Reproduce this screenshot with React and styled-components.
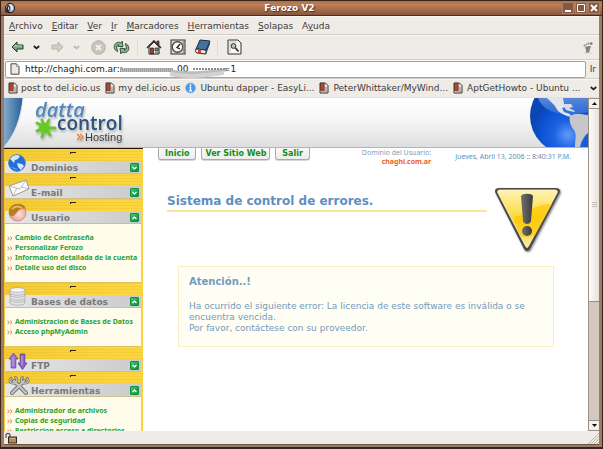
import React from 'react';
import styled, { createGlobalStyle } from 'styled-components';

const Global = createGlobalStyle`
  * { box-sizing: border-box; }
  html, body { margin: 0; padding: 0; }
  body { font-family: "DejaVu Sans", sans-serif; font-size: 9px; color: #3c3c3c; }
  button, input { font: inherit; color: inherit; margin: 0; padding: 0; border: 0; background: none; }
  a { color: inherit; text-decoration: none; }
  h1, h2, p, ul { margin: 0; padding: 0; }
  ul { list-style: none; }
  svg { display: block; flex: none; }
`;

/* ---------- window frame ---------- */

const Window = styled.div`
  display: flex;
  flex-direction: column;
  height: 100vh;
  padding: 0 3px;
  background: #9b7c68;
  border: solid #3a2417;
  border-width: 1px 1px 2px;
  overflow: hidden;
`;

const TitleBar = styled.header`
  display: grid;
  grid-template-columns: 50px 1fr 50px;
  align-items: center;
  flex: none;
  height: 15px;
  margin: 0 -3px;
  padding: 0 3px;
  background: linear-gradient(#a8714f, #bd7d57 25%, #a26a48 65%, #855740);
  border-bottom: 1px solid #4b2d1e;
`;

const WindowTitle = styled.h1`
  font-size: 9px;
  line-height: 14px;
  text-align: center;
  color: #fff;
  text-shadow: 1px 1px 1px #4b2d1e;
  padding-right: 24px;
`;

const WindowButtons = styled.div`
  display: flex;
  justify-content: flex-end;
  gap: 3px;
`;

const WindowButton = styled.button`
  width: 10px;
  height: 10px;
  background: #855843;
  outline: 1px solid #a98068;
`;

const Inner = styled.div`
  display: flex;
  flex-direction: column;
  flex: 1;
  min-height: 0;
  background: #efebe7;
  border-bottom: 1px solid #6d5546;
  margin-bottom: 2px;
`;

/* ---------- browser chrome ---------- */

const Bar = styled.div`
  display: flex;
  align-items: center;
  flex: none;
  height: ${(p) => p.$height}px;
  padding: 0 5px;
  border-bottom: 1px solid #d3cdc5;
  box-shadow: inset 0 1px #f9f8f6;
  white-space: nowrap;
`;

const MenuBar = styled(Bar)`
  gap: 9px;
  padding-top: 1px;
  line-height: 12px;
`;

const MenuButton = styled.button`
  line-height: 12px;
`;

const Mnemonic = styled.span`
  text-decoration: underline;
  text-underline-offset: 1px;
`;

const ToolButton = styled.button`
  display: flex;
  align-items: center;
  justify-content: center;
  width: ${(p) => p.$width || 16}px;
  margin-right: ${(p) => p.$gap || 0}px;
`;

const Divider = styled.span`
  width: 1px;
  height: 16px;
  margin-right: 8px;
  background: #e0dbd5;
`;

const Spacer = styled.span`
  flex: 1;
`;

const AddressBar = styled(Bar)`
  padding: 0 3px 0 1px;
  gap: 4px;
`;

const AddressField = styled.label`
  position: relative;
  display: flex;
  align-items: center;
  flex: 1;
  height: 17px;
  padding-left: 4px;
  gap: 5px;
  background: #fff;
  border: 1px solid #aaa197;
  border-radius: 2px;
`;

const AddressInput = styled.input`
  flex: 1;
  min-width: 0;
  height: 14px;
  color: #222;
  outline: 0;
  white-space: pre;
`;

const Smudge = styled.svg`
  position: absolute;
  left: 113px;
  top: 1px;
`;

const BookmarkBar = styled(Bar)`
  gap: 5px;
  padding: 0 4px;
  border-bottom-color: #e4dfd9;
`;

const Bookmark = styled.a`
  display: flex;
  align-items: center;
  gap: ${(p) => p.$gap}px;
  line-height: 12px;
`;

const StatusBar = styled.footer`
  display: flex;
  align-items: center;
  justify-content: space-between;
  flex: none;
  height: 13px;
`;

/* ---------- scrollable page ---------- */

const Viewport = styled.div`
  display: flex;
  flex: 1;
  min-height: 0;
`;

const Page = styled.main`
  display: flex;
  flex-direction: column;
  flex: 1;
  min-width: 0;
  overflow: hidden;
  background: #fff;
`;

const ScrollTrack = styled.div`
  display: flex;
  flex-direction: column;
  flex: none;
  width: 11px;
  background: #d2c9c0;
  border-left: 1px solid #9a9086;
`;

const ScrollArrow = styled.button`
  display: flex;
  align-items: center;
  justify-content: center;
  flex: none;
  height: 11px;
  background: #f3f0ed;
  border: solid #9a9086;
  border-width: 1px 0;
`;

const ScrollThumb = styled.div`
  display: flex;
  align-items: center;
  justify-content: center;
  flex: 0 0 58%;
  background: linear-gradient(90deg, #fcfbfa, #e6e1dc);
  border-bottom: 1px solid #9a9086;
`;

const Banner = styled.header`
  display: flex;
  justify-content: space-between;
  flex: none;
  height: 50px;
  background: linear-gradient(#fff, #f6f6f6 45%, #dedede);
  border-bottom: 1px solid #b4b4b4;
  overflow: hidden;
`;

const Brand = styled.div`
  display: flex;
`;

const Columns = styled.div`
  display: flex;
  flex: 1;
  min-height: 0;
`;

const Sidebar = styled.nav`
  flex: none;
  width: 139px;
  padding: 0 2px 0 1px;
  overflow: hidden;
  border-top: 1px solid #1f1a08;
  background:
    linear-gradient(90deg, rgba(200, 150, 20, 0.18), transparent 80%),
    repeating-linear-gradient(#fdd63d 0 2px, #f6cd37 2px 3px);
`;

const SectionHead = styled.div`
  display: grid;
  grid-template-columns: 26px 1fr 9px;
  align-items: end;
  position: relative;
  height: 25px;
  padding-right: 2px;
  background: linear-gradient(90deg, #e6e6e6, #cbcbcb) bottom / 100% 12px no-repeat;
  border-bottom: 1px solid #cfc08a;
`;

const Handle = styled.span`
  position: absolute;
  top: 3px;
  left: 65px;
  width: 6px;
  height: 2px;
  border: solid #2b2616;
  border-width: 1px 0 0 1px;
`;

const IconSlot = styled.span`
  display: flex;
  align-items: flex-end;
  height: 20px;
  padding: 0 0 1px 3px;
`;

const SectionTitle = styled.h2`
  font-size: 9px;
  line-height: 10px;
  color: #797979;
`;

const Toggle = styled.button`
  display: flex;
  align-items: center;
  justify-content: center;
  width: 9px;
  height: 9px;
  margin-bottom: 1px;
  background: linear-gradient(135deg, #4cc56c, #05933a);
  border: 1px solid #0f8f3a;
  border-radius: 1px;
`;

const LinkPanel = styled.ul`
  height: ${(p) => p.$height}px;
  padding: 9px 0 0 2px;
  background: #fffceb;
  border-bottom: 1px solid #dcc364;
`;

const LinkItem = styled.li`
  display: grid;
  grid-template-columns: 8px 1fr;
  align-items: center;
  height: 10px;
  font-family: "Noto Sans", "DejaVu Sans", sans-serif;
  font-size: 7px;
  line-height: 10px;
  font-weight: 700;
  color: #2ba030;
  white-space: nowrap;
`;

const Content = styled.section`
  flex: 1;
  min-width: 0;
`;

const TopRow = styled.div`
  display: flex;
  align-items: flex-start;
  padding: 0 17px 0 15px;
  white-space: nowrap;
`;

const Tabs = styled.div`
  display: flex;
  gap: 5px;
`;

const TabLink = styled.a`
  height: 12px;
  padding: 0 ${(p) => (p.$snug ? 3 : 6)}px;
  font-size: 8px;
  line-height: 11px;
  font-weight: 700;
  color: #138d14;
  background: linear-gradient(#f9f9f9, #ededed);
  border: 1px solid #a9a9a9;
  border-top: 0;
  border-radius: 0 0 3px 3px;
  box-shadow: 0 1px #d8d8d8;
`;

const Owner = styled.p`
  margin-left: auto;
  font-family: "Noto Sans", "DejaVu Sans", sans-serif;
  font-size: 7px;
  line-height: 9px;
  text-align: right;
  color: #7a9fbd;
`;

const OwnerDomain = styled.a`
  display: block;
  font-weight: 700;
  color: #ef6216;
`;

const DateText = styled.time`
  margin: 4px 0 0 24px;
  font-family: "Noto Sans", "DejaVu Sans", sans-serif;
  font-size: 7px;
  line-height: 9px;
  color: #5f8fb0;
`;

const ErrorHeader = styled.div`
  display: flex;
  justify-content: space-between;
  padding: 21px 25px 0 24px;
`;

const ErrorTitle = styled.h2`
  flex: 1;
  align-self: flex-start;
  margin: 6px 7px 0 0;
  padding-bottom: 1px;
  font-size: 12px;
  line-height: 16px;
  color: #5f8fc0;
  border-bottom: 2px solid #fae694;
`;

const Notice = styled.div`
  min-height: 81px;
  margin: 13px 34px 0 35px;
  padding: 8px 10px;
  color: #7299bd;
  background: #fffef4;
  border: 1px solid #f9efc0;
`;

const NoticeTitle = styled.h2`
  margin-bottom: 12px;
  font-size: 10px;
  line-height: 14px;
`;

const NoticeText = styled.p`
  font-size: 9px;
  line-height: 11px;
`;

/* ---------- drawings ---------- */

const AppIcon = () => (
  <svg width="11" height="12" viewBox="0 0 11 12">
    <circle cx="6" cy="6" r="4.6" fill="#9ab3c8" stroke="#1d1d22" />
    <path d="M5 2c3 0 4 2 4 5l-2 3c1-3 0-5-2-8z" fill="#e6edf2" />
    <path d="M1 10L4 2l2 3-1 6z" fill="#25282e" />
    <path d="M4 4l1 2-1 3z" fill="#fff" />
  </svg>
);

const Arrow = ({ flip, muted }) => (
  <svg width="13" height="12" viewBox="0 0 13 12">
    <path
      d={flip ? 'M12 6L7 1v3H1v4h6v3z' : 'M1 6l5-5v3h6v4H6v3z'}
      fill={muted ? '#d1cdc7' : '#74a878'}
      stroke={muted ? '#b9b4ae' : '#263c28'}
      strokeLinejoin="round"
    />
    {!muted && <path d="M3 6l2-2v1h6" fill="none" stroke="#bbdcb9" />}
  </svg>
);

const Caret = ({ muted }) => (
  <svg width="7" height="5" viewBox="0 0 7 5">
    <path d="M0.8 1l2.7 2.3L6.2 1" fill="none" stroke={muted ? '#bfb9b2' : '#1c1c1c'} strokeWidth="1.7" />
  </svg>
);

const StopIcon = () => (
  <svg width="15" height="15" viewBox="0 0 15 15">
    <circle cx="7.5" cy="7.5" r="6.8" fill="#c9c4be" stroke="#b5b0aa" />
    <path d="M5 5l5 5M10 5l-5 5" stroke="#f3f0ed" strokeWidth="1.9" />
  </svg>
);

const ReloadIcon = () => (
  <svg width="17" height="15" viewBox="0 0 17 15" strokeLinejoin="round">
    <path d="M4.500 11.500C1 10 0 5.500 3 3.200 4.500 2 6.500 2 8 3l1.200-1.800.8 5.600-5.300-.6L6 4.800C4 4.500 3 6.500 4 8.500z" fill="#8dbd8e" stroke="#26402a" strokeWidth=".9" />
    <path d="M12.500 3.500c3.500 1.500 4.500 6 1.500 8.300-1.500 1.200-3.500 1.200-5 .2l-1.200 1.800L7 8.200l5.300.6L11 10.200c2 .3 3-1.700 2-3.700z" fill="#8dbd8e" stroke="#26402a" strokeWidth=".9" />
  </svg>
);

const HomeIcon = () => (
  <svg width="16" height="16" viewBox="0 0 16 16">
    <path d="M3 8v7h10V8L8 3z" fill="#f2efe9" stroke="#26211f" />
    <path d="M11 2h2v4h-2z" fill="#a33a2a" stroke="#26211f" strokeWidth=".7" />
    <path d="M1 9l7-7 7 7" fill="none" stroke="#3b3432" strokeWidth="1.700" />
    <path d="M4.500 9h3v6h-3z" fill="#9c3e29" stroke="#26211f" strokeWidth=".7" />
    <path d="M9 9h3v3H9z" fill="#7893aa" stroke="#26211f" strokeWidth=".7" />
    <path d="M9 14h5" stroke="#4b8a3f" strokeWidth="1.500" />
  </svg>
);

const HistoryIcon = () => (
  <svg width="16" height="16" viewBox="0 0 16 16">
    <rect x="1" y="1" width="14" height="14" fill="#dad7d2" stroke="#33312f" />
    <circle cx="7.500" cy="8" r="5.300" fill="#fbfbfb" stroke="#4b4a48" strokeWidth="1.400" />
    <path d="M10 5L7 8.500l3 1.500" fill="none" stroke="#222" strokeWidth="1.300" />
    <path d="M13.300 2v12" stroke="#8c8a86" />
  </svg>
);

const BookIcon = () => (
  <svg width="17" height="16" viewBox="0 0 17 16">
    <path d="M6 1l10 1-4 9-10-1z" fill="#44709e" stroke="#1c2b3c" strokeLinejoin="round" />
    <path d="M2 10c-1 2-1 3 1 4l9 1v-4z" fill="#ece8e2" stroke="#26292e" strokeLinejoin="round" />
    <path d="M12 11l4-9v3l-4 10z" fill="#26415e" />
    <path d="M4 10v5l1.500-1L7 15.500V10.500z" fill="#c6452c" />
  </svg>
);

const SearchPageIcon = () => (
  <svg width="15" height="16" viewBox="0 0 15 16">
    <path d="M1 1h10l3 3v11H1z" fill="#f8f6f4" stroke="#343230" strokeLinejoin="round" />
    <path d="M3 13V3h7" fill="none" stroke="#c8c4be" />
    <circle cx="6.500" cy="7" r="2.400" fill="#a8cbb6" stroke="#2c2c2c" />
    <path d="M8.500 9l3 3.500" stroke="#2c2c2c" strokeWidth="1.700" />
  </svg>
);

const FootIcon = () => (
  <svg width="12" height="13" viewBox="0 0 12 13">
    <path d="M3 6c2-1 4-1 6-1L8 8l-1 4H4L4 9z" fill="#85817c" />
    <g fill="#85817c">
      <circle cx="2.500" cy="4.500" r=".9" /><circle cx="4.500" cy="3.300" r=".9" />
      <circle cx="6.600" cy="2.600" r="1" /><ellipse cx="9.300" cy="2.500" rx="1.300" ry="1.600" />
    </g>
    <path d="M2 12h8" stroke="#d7d2cc" />
  </svg>
);

const PageIcon = () => (
  <svg width="10" height="12" viewBox="0 0 10 12">
    <path d="M1 .8h5.500L9 3.500v7.700H1z" fill="#eceae6" stroke="#4a4744" />
    <path d="M6.500 1v2.500H9" fill="#fff" stroke="#77736f" strokeWidth=".7" />
  </svg>
);

const TagIcon = () => (
  <svg width="10" height="12" viewBox="0 0 10 12">
    <path d="M1 1h5.500L9 3.500V11H1z" fill="#e5e1dc" stroke="#3a3633" />
    <path d="M1.500 1.300h3.700v7.200H1.500z" fill="#b8452d" stroke="#5b251b" strokeWidth=".7" />
    <path d="M7 5v4.500M2.500 10h5" stroke="#8b857e" />
  </svg>
);

const InfoIcon = () => (
  <svg width="11" height="12" viewBox="0 0 11 12">
    <circle cx="5.500" cy="6" r="5" fill="#4c97e4" stroke="#8cbcf0" strokeWidth=".8" />
    <path d="M5.500 2.300v1.700M4.500 5.300h1v3.500M4 8.900h3" stroke="#fff" strokeWidth="1.400" fill="none" />
  </svg>
);

const LockIcon = () => (
  <svg width="13" height="12" viewBox="0 0 13 12">
    <path d="M2 6V3C2.500 .8 5.500 .8 6 3v2" fill="none" stroke="#4c4b49" strokeWidth="1.200" />
    <rect x="4.500" y="5" width="8" height="6" fill="#b58a58" stroke="#33271c" />
    <path d="M6 6.500h5" stroke="#d5b489" />
  </svg>
);

const GripIcon = () => (
  <svg width="12" height="12" viewBox="0 0 12 12">
    <path d="M1 12L12 1M4 12l8-8M7 12l5-5M10 12l2-2" stroke="#bdb7af" strokeWidth="1" />
  </svg>
);

const Swoosh = () => (
  <svg width="20" height="49" viewBox="0 0 20 49">
    <defs>
      <linearGradient id="swoosh" x1="0" x2="1">
        <stop offset="0" stopColor="#83a9cb" /><stop offset="1" stopColor="#245f98" />
      </linearGradient>
    </defs>
    <path d="M0 0h19C17 20 11 37 0 49z" fill="url(#swoosh)" />
    <path d="M19 0C17 20 11 37 0 49" fill="none" stroke="#dce6ee" />
  </svg>
);

const Logo = () => (
  <svg width="112" height="49" viewBox="0 0 112 49" role="img" aria-label="datta control Hosting">
    <defs>
      <filter id="logoShadow" x="-10%" y="-10%" width="130%" height="140%">
        <feDropShadow dx="1" dy="2" stdDeviation="1" floodColor="#777" floodOpacity=".5" />
      </filter>
    </defs>
    <g filter="url(#logoShadow)">
      <text x="11" y="19" fontFamily="Open Sans, sans-serif" fontStyle="italic" fontWeight="600" fontSize="20" fill="#5288bd">datta</text>
      <text x="33" y="32" fontFamily="Open Sans, sans-serif" fontWeight="600" fontSize="19" fill="#2b5480">control</text>
      <g stroke="#67c925" fill="#67c925" strokeWidth="3" strokeLinecap="round">
        <circle cx="20.500" cy="30" r="5.500" stroke="none" />
        <path d="M20 30l-2-8M21 30l4-8M20 29l-7-4M20 30l-7 3M20 31l-2 8M22 31l4 6M22 30l9 0" />
      </g>
      <path d="M53 36l3 3-3 3M56 36l3 3-3 3" fill="none" stroke="#f07b32" strokeWidth="1.300" />
      <text x="61" y="43" fontFamily="Liberation Sans, sans-serif" fontSize="11" fill="#3b3b3b">Hosting</text>
    </g>
  </svg>
);

const BannerGlobe = () => (
  <svg width="58" height="49" viewBox="0 0 58 49">
    <defs>
      <radialGradient id="sea" cx="38" cy="37" r="36" gradientUnits="userSpaceOnUse">
        <stop offset="0" stopColor="#5f9bf9" /><stop offset=".4" stopColor="#1c62e2" />
        <stop offset=".8" stopColor="#0a50d0" /><stop offset="1" stopColor="#0c45b4" />
      </radialGradient>
      <linearGradient id="shine" x1="0" x2="0" y1="0" y2="1">
        <stop offset="0" stopColor="#8ab4f2" /><stop offset="1" stopColor="#3b78e0" />
      </linearGradient>
    </defs>
    <circle cx="38" cy="18" r="38" fill="url(#sea)" />
    <path d="M8 0h50v14c-20 5-44 3-50-14z" fill="url(#shine)" opacity=".6" />
    <path d="M17 0h16l1 6 2 3-4 1 2 4 6 2 1 3-4-1c-5-2-9-4-11-8-1-3-5-6-9-10z" fill="#e3e5ea" />
    <path d="M33 6h8l2 3-4 1 6 3-1 1-8-2z" fill="#d9dde6" />
    <path d="M40 18c4-3 10-2 18-1v18c-5 4-7 10-8 14h-5c0-8 2-12-1-17-4-5-5-10-4-14z" fill="#c6c7cb" />
  </svg>
);

const WarningIcon = () => (
  <svg width="69" height="66" viewBox="0 0 69 66" role="img" aria-label="Advertencia">
    <defs>
      <linearGradient id="warn" x1="0" y1="0" x2="0" y2="1">
        <stop offset="0" stopColor="#fff3b4" /><stop offset=".5" stopColor="#fbd936" /><stop offset="1" stopColor="#fbe9a0" />
      </linearGradient>
      <linearGradient id="mark" x1="0" x2="1">
        <stop offset="0" stopColor="#707070" /><stop offset="1" stopColor="#3b3b3b" />
      </linearGradient>
      <filter id="warnShadow" x="-10%" y="-10%" width="130%" height="130%">
        <feDropShadow dx="1" dy="1" stdDeviation="1" floodColor="#000" floodOpacity=".5" />
      </filter>
    </defs>
    <path d="M5 1h57c4 0 5 3 3 6L36 62c-2 3-4 3-6 0L2 7C0 4 1 1 5 1z" fill="#4c4c4c" filter="url(#warnShadow)" />
    <path d="M6 3h55c2 0 3 1 2 3L34.500 59c-1 2-2 2-3 0L4 6C3 4 4 3 6 3z" fill="url(#warn)" stroke="#fff6cc" strokeWidth=".8" />
    <path d="M21 29c12 0 16-12 37-12L41 48c-5 3-11 3-15 1L20 34z" fill="#ffc800" opacity=".7" />
    <path d="M27 9c1-3 11-3 12 0l-2 25c-1 4-7 4-8 0z" fill="url(#mark)" />
    <circle cx="33" cy="44" r="5" fill="url(#mark)" />
  </svg>
);

const SectionIcon = ({ kind }) => {
  if (kind === 'globe') {
    return (
      <svg width="18" height="18" viewBox="0 0 18 18">
        <circle cx="9" cy="9" r="8.300" fill="#236fd8" stroke="#4b76b5" />
        <path d="M2 5c3-4 7-5 10-3l-2 3-3 1-1 3-2-2zM9 9l5 1 2 2-3 4-3-3z" fill="#d4e6fb" />
        <path d="M4 13c2 2 4 2 5 2" stroke="#6aaaf8" fill="none" />
      </svg>
    );
  }
  if (kind === 'mail') {
    return (
      <svg width="22" height="18" viewBox="0 0 22 18">
        <path d="M1 7l17-6 3 9L5 17z" fill="#fafafa" stroke="#9b9b9b" strokeLinejoin="round" />
        <path d="M1 7l11 3 6-9M5 17l4-8M21 10l-8-2" fill="none" stroke="#b0b0b0" strokeWidth=".8" />
      </svg>
    );
  }
  if (kind === 'user') {
    return (
      <svg width="19" height="19" viewBox="0 0 19 19">
        <defs>
          <radialGradient id="skin" cx=".6" cy=".6" r=".5">
            <stop offset="0" stopColor="#fbe0dc" /><stop offset="1" stopColor="#ee9c92" />
          </radialGradient>
        </defs>
        <circle cx="9.500" cy="9.500" r="8.500" fill="url(#skin)" stroke="#c58272" strokeWidth=".8" />
        <path d="M1 10C1 4 5 1 10 1s7 2 8 5c-4-1-6 0-8 2-2 2-3 4-5 5-3 0-4-1-4-3z" fill="#b97c1c" />
        <path d="M4 6c3-3 7-3 10-1" stroke="#e6bb57" strokeWidth="2" fill="none" />
      </svg>
    );
  }
  if (kind === 'database') {
    return (
      <svg width="19" height="19" viewBox="0 0 19 19" fill="#e6e6e6" stroke="#a2a2a2" strokeWidth=".7">
        <path d="M2 13v3c2 3 13 3 15 0v-3z" /><ellipse cx="9.500" cy="13" rx="7.500" ry="2.300" />
        <path d="M2 8v3c2 3 13 3 15 0V8z" /><ellipse cx="9.500" cy="8" rx="7.500" ry="2.300" />
        <path d="M2 3v3c2 3 13 3 15 0V3z" /><ellipse cx="9.500" cy="3" rx="7.500" ry="2.300" fill="#f8f8f8" />
      </svg>
    );
  }
  if (kind === 'ftp') {
    return (
      <svg width="20" height="18" viewBox="0 0 20 18" strokeLinejoin="round">
        <path d="M5.500 1L10 7H7.800v9H3.200V7H1z" fill="#9b72ce" stroke="#67459b" strokeWidth=".8" />
        <path d="M14.500 17.500L10 11h2.200V2h4.600v9H19z" fill="#8e64c8" stroke="#5a398d" strokeWidth=".8" />
        <path d="M5 5v9M14 4v9" stroke="#c9aceb" />
      </svg>
    );
  }
  return (
    <svg width="22" height="19" viewBox="0 0 22 19" fill="none" strokeLinecap="round">
      <path d="M4 17L16 5M18 17L6 5" stroke="#6f6f6f" strokeWidth="4" />
      <path d="M3 2C0 6 4 8.500 8 6.500M7.500 1.500C9 3 9 5 8 6.500M19 2c3 4-1 6.500-5 4.500M14.500 1.500C13 3 13 5 14 6.500" stroke="#6f6f6f" strokeWidth="2.600" />
      <path d="M4 17L16 5M18 17L6 5" stroke="#c4c4c4" strokeWidth="2.400" />
      <path d="M3 2C0 6 4 8.500 8 6.500M7.500 1.500C9 3 9 5 8 6.500M19 2c3 4-1 6.500-5 4.500M14.500 1.500C13 3 13 5 14 6.500" stroke="#c4c4c4" strokeWidth="1.200" />
    </svg>
  );
};

const Bullet = () => (
  <svg width="6" height="6" viewBox="0 0 6 6">
    <path d="M.5 1.700l1.700 1.700L.5 5.200M3.200 1.700L5 3.400 3.200 5.200" fill="none" stroke="#f0632b" />
  </svg>
);

/* ---------- data ---------- */

const menus = [
  ['', 'A', 'rchivo'], ['', 'E', 'ditar'], ['', 'V', 'er'], ['', 'I', 'r'],
  ['', 'M', 'arcadores'], ['', 'H', 'erramientas'], ['', 'S', 'olapas'], ['A', 'y', 'uda'],
];

const bookmarks = [
  { label: 'post to del.icio.us' },
  { label: 'my del.icio.us' },
  { label: 'Ubuntu dapper - EasyLi...', info: true },
  { label: 'PeterWhittaker/MyWind...', wide: true },
  { label: 'AptGetHowto - Ubuntu ...', wide: true },
];

const address = `http://chaghi.com.ar::${' '.repeat(19)}00${' '.repeat(12)}=1`;

const sections = [
  { title: 'Dominios', kind: 'globe' },
  { title: 'E-mail', kind: 'mail' },
  {
    title: 'Usuario', kind: 'user', height: 59,
    links: ['Cambio de Contraseña', 'Personalizar Ferozo', 'Información detallada de la cuenta', 'Detalle uso del disco'],
  },
  {
    title: 'Bases de datos', kind: 'database', height: 39,
    links: ['Administracion de Bases de Datos', 'Acceso phpMyAdmin'],
  },
  { title: 'FTP', kind: 'ftp' },
  {
    title: 'Herramientas', kind: 'tools', height: 59,
    links: ['Administrador de archivos', 'Copias de seguridad', 'Restriccion acceso a directorios'],
  },
];

const Section = ({ title, kind, links, height }) => (
  <section>
    <SectionHead>
      <Handle />
      <IconSlot><SectionIcon kind={kind} /></IconSlot>
      <SectionTitle>{title}</SectionTitle>
      <Toggle aria-label={title} aria-expanded={!!links}>
        <svg width="5" height="4" viewBox="0 0 5 4">
          <path d={links ? 'M.5 3l2-2 2 2' : 'M.5 1l2 2 2-2'} fill="none" stroke="#fff" strokeWidth="1.200" />
        </svg>
      </Toggle>
    </SectionHead>
    {links && (
      <LinkPanel $height={height}>
        {links.map((link) => (
          <LinkItem key={link}><Bullet /><a href="#">{link}</a></LinkItem>
        ))}
      </LinkPanel>
    )}
  </section>
);

export default function App() {
  return (
    <>
      <Global />
      <Window>
        <TitleBar>
          <AppIcon />
          <WindowTitle>Ferozo V2</WindowTitle>
          <WindowButtons>
            <WindowButton aria-label="Minimizar">
              <svg width="10" height="10" viewBox="0 0 10 10"><path d="M2 8h6" stroke="#fff" strokeWidth="2" /></svg>
            </WindowButton>
            <WindowButton aria-label="Maximizar">
              <svg width="10" height="10" viewBox="0 0 10 10"><path d="M1.500 1.500h7v7h-7z" fill="none" stroke="#fff" /></svg>
            </WindowButton>
            <WindowButton aria-label="Cerrar">
              <svg width="10" height="10" viewBox="0 0 10 10"><path d="M2 2l6 6M8 2L2 8" stroke="#fff" strokeWidth="1.800" /></svg>
            </WindowButton>
          </WindowButtons>
        </TitleBar>
        <Inner>
          <MenuBar as="nav" $height={19}>
            {menus.map(([before, key, after]) => (
              <MenuButton key={key}>{before}<Mnemonic>{key}</Mnemonic>{after}</MenuButton>
            ))}
          </MenuBar>
          <Bar $height={25}>
            <ToolButton $gap={5} aria-label="Atrás"><Arrow /></ToolButton>
            <ToolButton $width={12} $gap={7} aria-label="Historial atrás"><Caret /></ToolButton>
            <ToolButton $gap={5} disabled aria-label="Adelante"><Arrow flip muted /></ToolButton>
            <ToolButton $width={12} $gap={8} disabled aria-label="Historial adelante"><Caret muted /></ToolButton>
            <ToolButton $gap={7} disabled aria-label="Detener"><StopIcon /></ToolButton>
            <ToolButton $gap={8} aria-label="Recargar"><ReloadIcon /></ToolButton>
            <Divider />
            <ToolButton $gap={8} aria-label="Inicio"><HomeIcon /></ToolButton>
            <ToolButton $gap={8} aria-label="Historial"><HistoryIcon /></ToolButton>
            <ToolButton $gap={7} aria-label="Marcadores"><BookIcon /></ToolButton>
            <Divider />
            <ToolButton aria-label="Buscar"><SearchPageIcon /></ToolButton>
            <Spacer />
            <FootIcon />
          </Bar>
          <AddressBar $height={19}>
            <AddressField>
              <PageIcon />
              <AddressInput aria-label="Dirección" defaultValue={address} />
              <Smudge width="114" height="15" viewBox="0 0 114 15">
                <defs>
                  <filter id="soft" x="-5%" y="-30%" width="110%" height="160%"><feGaussianBlur stdDeviation=".7" /></filter>
                </defs>
                <g filter="url(#soft)" fill="none">
                  <path d="M1 7h53" stroke="#bdbdbd" strokeWidth="4" />
                  <path d="M1 6h53M1 8h53" stroke="#7d7d7d" strokeDasharray="1 1" />
                  <path d="M53 8c10 3 30 2 54-1" stroke="#bcbcbc" strokeWidth="3" />
                  <path d="M51 11c20 4 36 1 54-1" stroke="#d2d2d2" strokeWidth="4" />
                  <path d="M74 6h34" stroke="#8c8c8c" strokeWidth="2" strokeDasharray="2 1" />
                </g>
              </Smudge>
            </AddressField>
            <button>Ir</button>
          </AddressBar>
          <BookmarkBar as="nav" $height={19}>
            {bookmarks.map(({ label, info, wide }) => (
              <Bookmark key={label} href="#" $gap={info || wide ? 4 : 3}>
                {info ? <InfoIcon /> : <TagIcon />}{label}
              </Bookmark>
            ))}
            <Spacer />
            <button aria-label="Más marcadores"><Caret /></button>
          </BookmarkBar>
          <Viewport>
            <Page>
              <Banner>
                <Brand><Swoosh /><Logo /></Brand>
                <BannerGlobe />
              </Banner>
              <Columns>
                <Sidebar>
                  {sections.map((section) => <Section key={section.title} {...section} />)}
                </Sidebar>
                <Content>
                  <TopRow>
                    <Tabs>
                      <TabLink href="#">Inicio</TabLink>
                      <TabLink href="#" $snug>Ver Sitio Web</TabLink>
                      <TabLink href="#">Salir</TabLink>
                    </Tabs>
                    <Owner>Dominio del Usuario:<OwnerDomain href="#">chaghi.com.ar</OwnerDomain></Owner>
                    <DateText>Jueves, Abril 13, 2006 :: 8:40:31 P.M.</DateText>
                  </TopRow>
                  <ErrorHeader>
                    <ErrorTitle>Sistema de control de errores.</ErrorTitle>
                    <WarningIcon />
                  </ErrorHeader>
                  <Notice role="alert">
                    <NoticeTitle>Atención..!</NoticeTitle>
                    <NoticeText>
                      Ha ocurrido el siguiente error: La licencia de este software es inválida o se encuentra vencida.
                      <br />
                      Por favor, contáctese con su proveedor.
                    </NoticeText>
                  </Notice>
                </Content>
              </Columns>
            </Page>
            <ScrollTrack>
              <ScrollArrow aria-label="Subir">
                <svg width="5" height="3" viewBox="0 0 5 3"><path d="M0 3l2.500-3L5 3z" fill="#111" /></svg>
              </ScrollArrow>
              <ScrollThumb>
                <svg width="5" height="6" viewBox="0 0 5 6"><path d="M0 .5h5M0 2.500h5M0 4.500h5" stroke="#c6beb5" /></svg>
              </ScrollThumb>
              <Spacer />
              <ScrollArrow aria-label="Bajar">
                <svg width="5" height="3" viewBox="0 0 5 3"><path d="M0 0h5L2.500 3z" fill="#111" /></svg>
              </ScrollArrow>
            </ScrollTrack>
          </Viewport>
          <StatusBar><LockIcon /><GripIcon /></StatusBar>
        </Inner>
      </Window>
    </>
  );
}
